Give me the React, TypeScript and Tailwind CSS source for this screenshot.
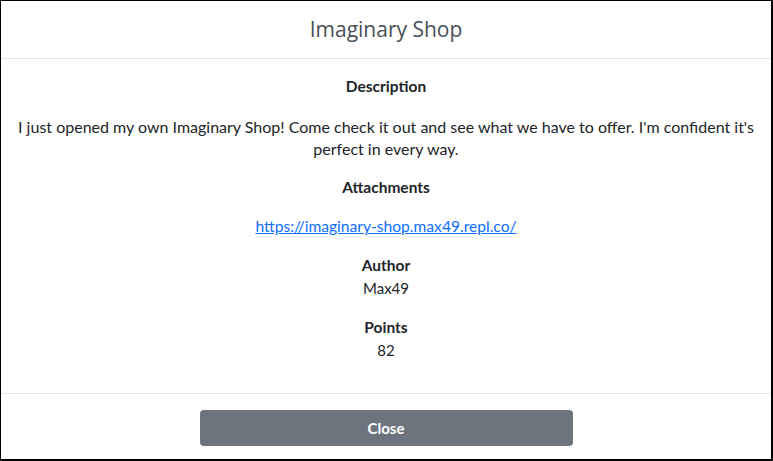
export default function App() {
  return (
    <div
      className="w-[773px] h-[461px] bg-white border-t border-l border-r-2 border-b-2 border-black flex flex-col text-[#212529]"
      style={{ fontFamily: "Lato, 'Noto Sans', sans-serif" }}
    >
      <div className="h-[58px] border-b border-[#e5e7ea] flex items-center justify-center">
        <h2 className="text-[21px] text-[#4a4f55] font-normal" style={{ fontFamily: "'Open Sans', sans-serif" }}>
          Imaginary Shop
        </h2>
      </div>
      <div className="flex-1 flex flex-col items-center text-center text-[15px] px-4 pt-[16px]">
        <div className="font-bold leading-[22px] text-[15.5px]">Description</div>
        <p className="mt-[19px] leading-[22px] text-[16px]">
          I just opened my own Imaginary Shop! Come check it out and see what we have to offer. I'm confident it's perfect in every way.
        </p>
        <div className="font-bold leading-[22px] mt-[16px] text-[15.5px]">Attachments</div>
        <a href="#" className="mt-[17px] leading-[22px] text-[15.6px] text-[#0d6efd] underline">
          https://imaginary-shop.max49.repl.co/
        </a>
        <div className="font-bold leading-[22px] mt-[17px] text-[15.5px]">Author</div>
        <div className="leading-[22px] mt-[1px]">Max49</div>
        <div className="font-bold leading-[22px] mt-[17px] text-[15.5px]">Points</div>
        <div className="leading-[22px] mt-[1px]">82</div>
      </div>
      <div className="h-[66px] border-t border-[#e5e7ea] flex items-start justify-center pt-[16px]">
        <button className="w-[373px] h-[36px] rounded-[4px] bg-[#6c757d] text-white text-[15px] font-bold">
          Close
        </button>
      </div>
    </div>
  );
}
